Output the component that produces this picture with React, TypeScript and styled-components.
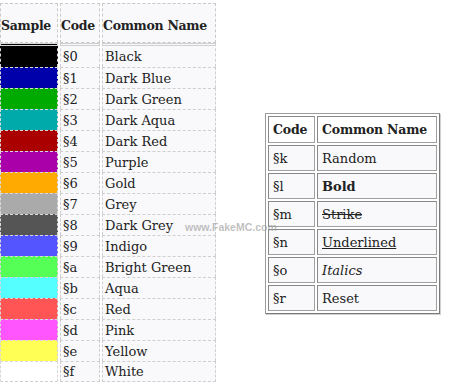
import React from 'react';
import styled, { createGlobalStyle } from 'styled-components';

type ColorCode = { code: string; name: string; hex: string };

const colorCodes: ColorCode[] = [
  { code: '0', name: 'Black', hex: '#000000' },
  { code: '1', name: 'Dark Blue', hex: '#0000aa' },
  { code: '2', name: 'Dark Green', hex: '#00aa00' },
  { code: '3', name: 'Dark Aqua', hex: '#00aaaa' },
  { code: '4', name: 'Dark Red', hex: '#aa0000' },
  { code: '5', name: 'Purple', hex: '#aa00aa' },
  { code: '6', name: 'Gold', hex: '#ffaa00' },
  { code: '7', name: 'Grey', hex: '#aaaaaa' },
  { code: '8', name: 'Dark Grey', hex: '#555555' },
  { code: '9', name: 'Indigo', hex: '#5555ff' },
  { code: 'a', name: 'Bright Green', hex: '#55ff55' },
  { code: 'b', name: 'Aqua', hex: '#55ffff' },
  { code: 'c', name: 'Red', hex: '#ff5555' },
  { code: 'd', name: 'Pink', hex: '#ff55ff' },
  { code: 'e', name: 'Yellow', hex: '#ffff55' },
  { code: 'f', name: 'White', hex: '#ffffff' },
];

type Format = 'plain' | 'bold' | 'strike' | 'underline' | 'italic';

const formatCodes: { code: string; name: string; format: Format }[] = [
  { code: 'k', name: 'Random', format: 'plain' },
  { code: 'l', name: 'Bold', format: 'bold' },
  { code: 'm', name: 'Strike', format: 'strike' },
  { code: 'n', name: 'Underlined', format: 'underline' },
  { code: 'o', name: 'Italics', format: 'italic' },
  { code: 'r', name: 'Reset', format: 'plain' },
];

const App: React.FC = () => {
  return (
    <>
      <GlobalStyle />
      <Page>
        <ColorTable>
          <thead>
            <tr>
              <HeadCell $width={56}>Sample</HeadCell>
              <HeadCell $width={38}>Code</HeadCell>
              <HeadCell $width={112}>Common Name</HeadCell>
            </tr>
          </thead>
          <tbody>
            {colorCodes.map(item => (
              <tr key={item.code}>
                <Swatch $color={item.hex} />
                <Cell>§{item.code}</Cell>
                <Cell>{item.name}</Cell>
              </tr>
            ))}
          </tbody>
        </ColorTable>

        <FormatColumn>
          <FormatTable>
            <thead>
              <tr>
                <FormatHead $width={37}>Code</FormatHead>
                <FormatHead $width={110}>Common Name</FormatHead>
              </tr>
            </thead>
            <tbody>
              {formatCodes.map(item => (
                <tr key={item.code}>
                  <FormatCell>§{item.code}</FormatCell>
                  <FormatCell>
                    <Styled $format={item.format}>{item.name}</Styled>
                  </FormatCell>
                </tr>
              ))}
            </tbody>
          </FormatTable>
        </FormatColumn>

        <Watermark>www.FakeMC.com</Watermark>
      </Page>
    </>
  );
};

export default App;

const GlobalStyle = createGlobalStyle`
  body {
    margin: 0;
    background: #ffffff;
    font-family: 'DejaVu Serif', 'Liberation Serif', serif;
    color: #222222;
  }
`;

const Page = styled.div`
  position: relative;
  width: 474px;
  height: 385px;
  display: flex;
  align-items: flex-start;
  gap: 47px;
  padding-top: 3px;
  overflow: hidden;
  box-sizing: border-box;
`;

const ColorTable = styled.table`
  border-collapse: separate;
  border-spacing: 2px 0;
  margin-left: -2px;
  font-size: 13px;
  table-layout: fixed;
`;

const HeadCell = styled.th<{ $width: number }>`
  width: ${p => p.$width}px;
  height: 34px;
  padding: 4px 0 0;
  text-align: left;
  font-size: 12.5px;
  letter-spacing: -0.3px;
  font-weight: bold;
  background: #f9f9fc;
  border: 1px dashed #c8c8c8;
  white-space: nowrap;
  overflow: visible;
`;

const Cell = styled.td`
  height: 21px;
  padding: 0 2px;
  box-sizing: border-box;
  background: #f9f9fc;
  border: 1px dashed #cfcfcf;
  border-bottom: none;
  white-space: nowrap;
  vertical-align: middle;

  tr:last-child > & {
    border-bottom: 1px dashed #cfcfcf;
  }
  tr:first-child > & {
    height: 24px;
    border-top-width: 3px;
    border-top-style: double;
  }
`;

const Swatch = styled(Cell)<{ $color: string }>`
  background: ${p => p.$color};
  border-color: #d8d8d8;
`;

const FormatColumn = styled.div`
  padding-top: 110px;
`;

const FormatTable = styled.table`
  border: 1px solid #9a9a9a;
  border-right-color: #7a7a7a;
  border-bottom-color: #7a7a7a;
  border-spacing: 2px;
  box-shadow: 1px 1px 0 #d0d0d0;
  font-size: 13px;
`;

const FormatHead = styled.th<{ $width: number }>`
  width: ${p => p.$width}px;
  height: 25px;
  padding: 0 4px;
  text-align: left;
  font-size: 12.5px;
  letter-spacing: -0.2px;
  font-weight: bold;
  background: #ffffff;
  border: 1px solid #a0a0a0;
  border-top-color: #888888;
  border-left-color: #888888;
  white-space: nowrap;
`;

const FormatCell = styled.td`
  height: 24px;
  padding: 0 4px;
  background: #f9f9fc;
  border: 1px solid #a0a0a0;
  border-top-color: #888888;
  border-left-color: #888888;
  white-space: nowrap;
`;

const Styled = styled.span<{ $format: Format }>`
  font-weight: ${p => (p.$format === 'bold' ? 'bold' : 'normal')};
  font-style: ${p => (p.$format === 'italic' ? 'italic' : 'normal')};
  text-decoration: ${p =>
    p.$format === 'strike' ? 'line-through' : p.$format === 'underline' ? 'underline' : 'none'};
`;

const Watermark = styled.div`
  position: absolute;
  left: 185px;
  top: 221px;
  z-index: 2;
  font-family: 'Liberation Sans', Arial, sans-serif;
  font-size: 10.5px;
  font-weight: bold;
  color: rgba(150, 150, 150, 0.6);
  pointer-events: none;
`;
